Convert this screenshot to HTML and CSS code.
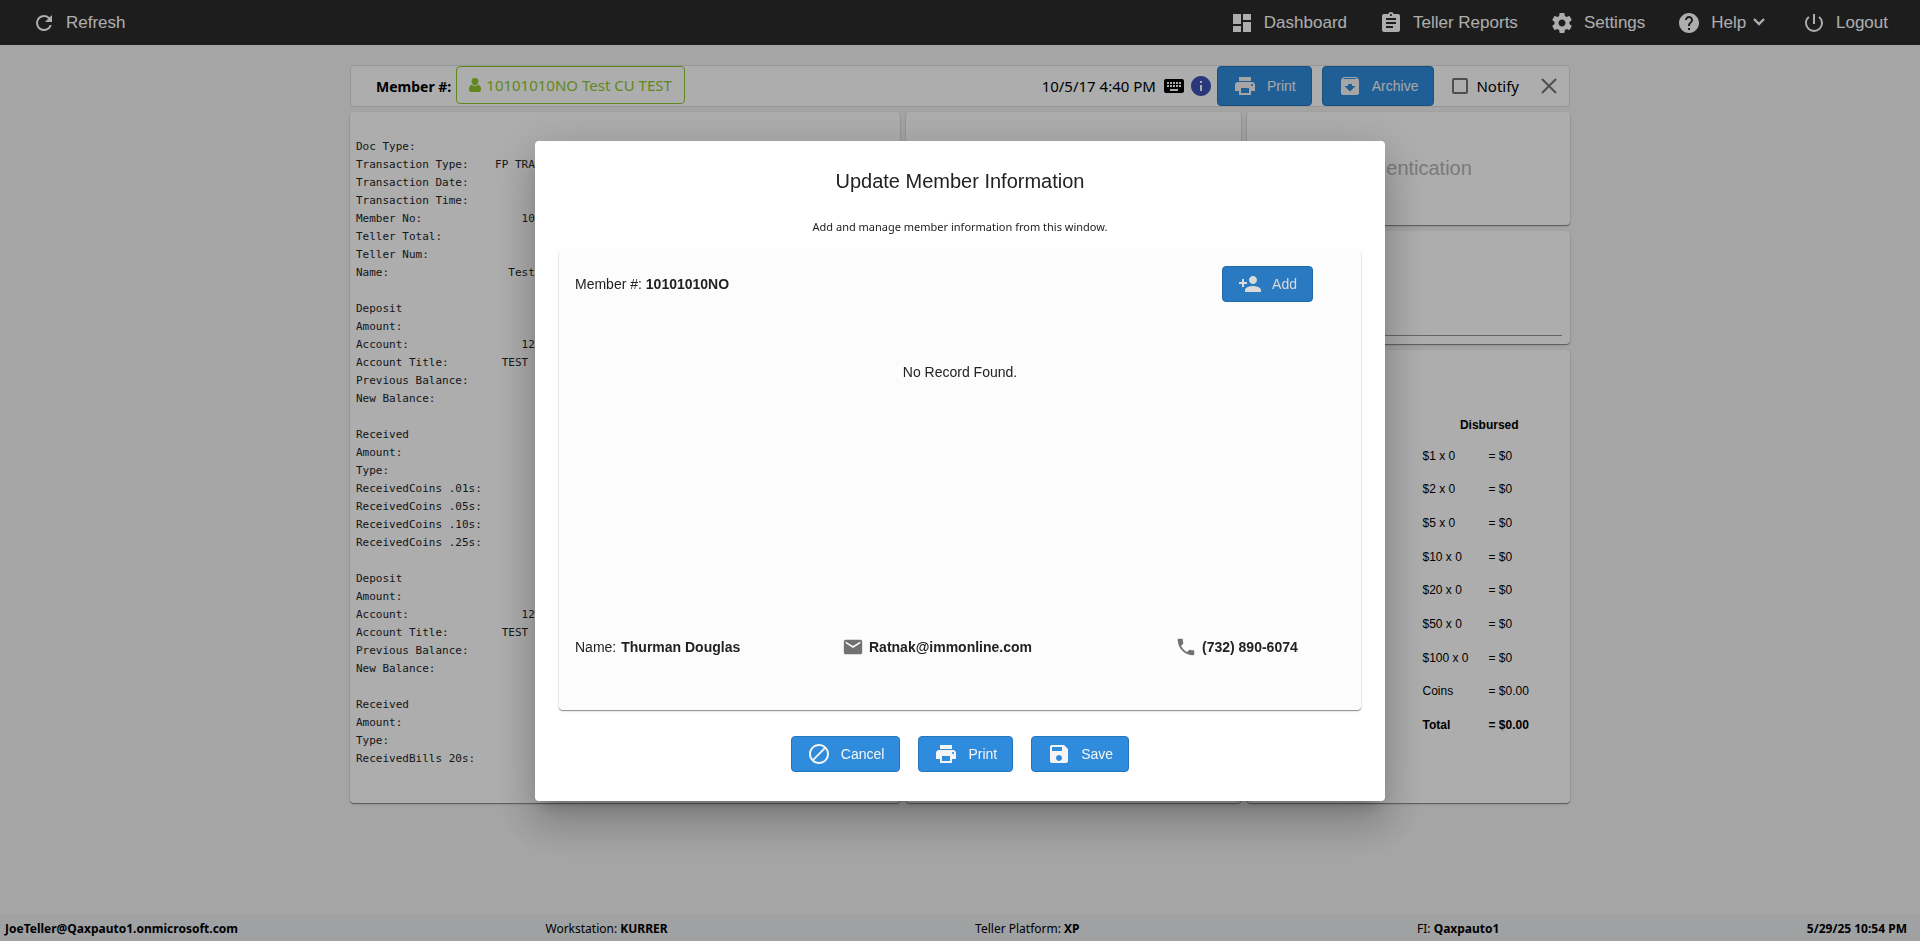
FILE: index.html
```html
<!doctype html>
<html lang="en">
<head>
<meta charset="utf-8">
<title>Teller</title>
<link rel="stylesheet" href="styles.css">
</head>
<body>

<nav class="navbar">
	<a href="#" class="nav-link">
		<svg class="icon" viewBox="0 0 24 24"><path d="M17.65 6.35A7.96 7.96 0 0 0 12 4a8 8 0 1 0 7.73 10h-2.08A6 6 0 1 1 12 6c1.66 0 3.14.69 4.22 1.78L13 11h7V4z"/></svg>
		Refresh
	</a>
	<div class="nav-right">
		<a href="#" class="nav-link">
			<svg class="icon" viewBox="0 0 24 24"><path d="M3 13h8V3H3v10zm0 8h8v-6H3v6zm10 0h8V11h-8v10zm0-18v6h8V3h-8z"/></svg>
			Dashboard
		</a>
		<a href="#" class="nav-link">
			<svg class="icon" viewBox="0 0 24 24"><path d="M19 3h-4.18C14.4 1.84 13.3 1 12 1s-2.4.84-2.82 2H5c-1.1 0-2 .9-2 2v14c0 1.1.9 2 2 2h14c1.1 0 2-.9 2-2V5c0-1.1-.9-2-2-2zm-7 0c.55 0 1 .45 1 1s-.45 1-1 1-1-.45-1-1 .45-1 1-1zm2 14H7v-2h7v2zm3-4H7v-2h10v2zm0-4H7V7h10v2z"/></svg>
			Teller Reports
		</a>
		<a href="#" class="nav-link">
			<svg class="icon" viewBox="0 0 24 24"><path d="M19.43 12.98c.04-.32.07-.64.07-.98s-.03-.66-.07-.98l2.11-1.65c.19-.15.24-.42.12-.64l-2-3.46c-.12-.22-.39-.3-.61-.22l-2.49 1c-.52-.4-1.08-.73-1.69-.98l-.38-2.65C14.46 2.18 14.25 2 14 2h-4c-.25 0-.46.18-.49.42l-.38 2.65c-.61.25-1.17.59-1.69.98l-2.49-1c-.23-.09-.49 0-.61.22l-2 3.46c-.13.22-.07.49.12.64l2.11 1.65c-.04.32-.07.65-.07.98s.03.66.07.98l-2.11 1.65c-.19.15-.24.42-.12.64l2 3.46c.12.22.39.3.61.22l2.49-1c.52.4 1.08.73 1.69.98l.38 2.65c.03.24.24.42.49.42h4c.25 0 .46-.18.49-.42l.38-2.65c.61-.25 1.17-.59 1.69-.98l2.49 1c.23.09.49 0 .61-.22l2-3.46c.12-.22.07-.49-.12-.64l-2.11-1.65zM12 15.5c-1.93 0-3.5-1.57-3.5-3.5s1.57-3.5 3.5-3.5 3.5 1.57 3.5 3.5-1.57 3.5-3.5 3.5z"/></svg>
			Settings
		</a>
		<button type="button" class="nav-link">
			<svg class="icon" viewBox="0 0 24 24"><path d="M12 2C6.48 2 2 6.48 2 12s4.48 10 10 10 10-4.48 10-10S17.52 2 12 2zm1 17h-2v-2h2v2zm2.07-7.75l-.9.92C13.45 12.9 13 13.5 13 15h-2v-.5c0-1.1.45-2.1 1.17-2.83l1.24-1.26c.37-.36.59-.86.59-1.41 0-1.1-.9-2-2-2s-2 .9-2 2H8c0-2.21 1.79-4 4-4s4 1.79 4 4c0 .88-.36 1.68-.93 2.25z"/></svg>
			<span class="help-label">Help <svg class="chevron" viewBox="0 0 12 12"><path d="M1 3l5 5 5-5"/></svg></span>
		</button>
		<a href="#" class="nav-link">
			<svg class="icon" viewBox="0 0 24 24"><path d="M13 3h-2v10h2V3zm4.83 2.17l-1.42 1.42A6.92 6.92 0 0 1 19 12c0 3.87-3.13 7-7 7A6.995 6.995 0 0 1 7.58 6.58L6.17 5.17A8.932 8.932 0 0 0 3 12a9 9 0 0 0 18 0c0-2.74-1.23-5.18-3.17-6.83z"/></svg>
			Logout
		</a>
	</div>
</nav>

<main class="container">
	<header class="toolbar">
		<b>Member #:</b>
		<button type="button" class="member-btn">
			<svg class="user" viewBox="0 0 12 14"><path d="M6 0a3.4 3.4 0 0 1 3.4 3.5C9.400 5.500 8 7.200 6 7.200S2.600 5.500 2.600 3.500A3.400 3.400 0 0 1 6 0zM3 6.800c.8.800 1.900 1.300 3 1.300s2.200-.5 3-1.300c2.200.2 3 2.300 3 4.700 0 1.500-.9 2.500-2.200 2.500H2.200C.9 14 0 13 0 11.500c0-2.400.8-4.500 3-4.700z"/></svg>
			10101010NO Test CU TEST
		</button>
		<div class="toolbar-right">
			<span class="date">10/5/17 4:40 PM</span>
			<svg class="icon keyboard" viewBox="0 0 24 24"><path d="M20 5H4c-1.100 0-2 .9-2 2v10c0 1.100.9 2 2 2h16c1.100 0 2-.9 2-2V7c0-1.100-.9-2-2-2zm-9 3h2v2h-2V8zm0 3h2v2h-2v-2zM8 8h2v2H8V8zm0 3h2v2H8v-2zm-1 2H5v-2h2v2zm0-3H5V8h2v2zm9 7H8v-2h8v2zm0-4h-2v-2h2v2zm0-3h-2V8h2v2zm3 3h-2v-2h2v2zm0-3h-2V8h2v2z"/></svg>
			<svg class="icon info" viewBox="0 0 24 24"><path d="M12 2C6.480 2 2 6.480 2 12s4.480 10 10 10 10-4.480 10-10S17.520 2 12 2zm1 15h-2v-6h2v6zm0-8h-2V7h2v2z"/></svg>
			<button type="button" class="btn btn-tall">
				<svg class="icon" viewBox="0 0 24 24"><path d="M19 8H5c-1.660 0-3 1.340-3 3v6h4v4h12v-4h4v-6c0-1.660-1.340-3-3-3zm-3 11H8v-5h8v5zm3-7c-.55 0-1-.45-1-1s.45-1 1-1 1 .45 1 1-.45 1-1 1zm-1-9H6v4h12V3z"/></svg>
				Print
			</button>
			<button type="button" class="btn btn-tall archive">
				<svg class="icon" viewBox="0 0 24 24"><path d="M20.540 5.230l-1.390-1.680C18.880 3.210 18.470 3 18 3H6c-.47 0-.88.21-1.160.55L3.460 5.230C3.170 5.570 3 6.020 3 6.500V19c0 1.100.9 2 2 2h14c1.100 0 2-.9 2-2V6.500c0-.48-.17-.93-.46-1.270zM12 17.500L6.500 12H10v-2h4v2h3.500L12 17.500zM5.120 5l.81-1h12l.94 1H5.120z"/></svg>
				Archive
			</button>
			<label class="notify"><input type="checkbox"> Notify</label>
			<button type="button" class="close" aria-label="Close">
				<svg class="icon" viewBox="0 0 24 24"><path d="M5 5l14 14M19 5L5 19"/></svg>
			</button>
		</div>
	</header>

	<div class="columns">
		<section class="card receipt">
<pre>
Doc Type:
Transaction Type:    FP TRAN
Transaction Date:
Transaction Time:
Member No:               101010
Teller Total:
Teller Num:
Name:                  Test CU

Deposit
Amount:
Account:                 12
Account Title:        TEST -
Previous Balance:
New Balance:

Received
Amount:
Type:
ReceivedCoins .01s:
ReceivedCoins .05s:
ReceivedCoins .10s:
ReceivedCoins .25s:

Deposit
Amount:
Account:                 12
Account Title:        TEST -
Previous Balance:
New Balance:

Received
Amount:
Type:
ReceivedBills 20s:
</pre>
		</section>
		<section class="card"></section>
		<div class="side">
			<section class="card auth">Authentication</section>
			<section class="card sign"><div class="sign-line"></div></section>
			<section class="card cash">
				<table>
					<thead><tr><th colspan="2">Disbursed</th></tr></thead>
					<tbody>
						<tr><td>$1 x 0</td><td>= $0</td></tr>
						<tr><td>$2 x 0</td><td>= $0</td></tr>
						<tr><td>$5 x 0</td><td>= $0</td></tr>
						<tr><td>$10 x 0</td><td>= $0</td></tr>
						<tr><td>$20 x 0</td><td>= $0</td></tr>
						<tr><td>$50 x 0</td><td>= $0</td></tr>
						<tr><td>$100 x 0</td><td>= $0</td></tr>
						<tr><td>Coins</td><td>= $0.00</td></tr>
						<tr class="total"><td>Total</td><td>= $0.00</td></tr>
					</tbody>
				</table>
			</section>
		</div>
	</div>
</main>

<footer class="statusbar">
	<span><b>JoeTeller@Qaxpauto1.onmicrosoft.com</b></span>
	<span>Workstation: <b>KURRER</b></span>
	<span>Teller Platform: <b>XP</b></span>
	<span class="fi">FI: <b>Qaxpauto1</b></span>
	<span><b>5/29/25 10:54 PM</b></span>
</footer>

<div class="backdrop">
	<div class="modal" role="dialog" aria-labelledby="modal-title">
		<h2 id="modal-title">Update Member Information</h2>
		<p class="subtitle">Add and manage member information from this window.</p>
		<div class="card modal-card">
			<div class="modal-head">
				<span>Member #: <b>10101010NO</b></span>
				<button type="button" class="btn btn-hover">
					<svg class="icon" viewBox="0 0 24 24"><path d="M15 12c2.210 0 4-1.790 4-4s-1.790-4-4-4-4 1.790-4 4 1.790 4 4 4zm-9-2V7H4v3H1v2h3v3h2v-3h3v-2H6zm9 4c-2.670 0-8 1.340-8 4v2h16v-2c0-2.660-5.330-4-8-4z"/></svg>
					Add
				</button>
			</div>
			<p class="empty">No Record Found.</p>
			<div class="contact">
				<span>Name: <b>Thurman Douglas</b></span>
				<span>
					<svg class="icon" viewBox="0 0 24 24"><path d="M20 4H4c-1.100 0-1.990.9-1.990 2L2 18c0 1.100.9 2 2 2h16c1.100 0 2-.9 2-2V6c0-1.100-.9-2-2-2zm0 4l-8 5-8-5V6l8 5 8-5v2z"/></svg>
					<b>Ratnak@immonline.com</b>
				</span>
				<span>
					<svg class="icon" viewBox="0 0 24 24"><path d="M6.620 10.790c1.440 2.830 3.760 5.140 6.590 6.590l2.200-2.200c.27-.27.67-.36 1.020-.24 1.120.37 2.330.57 3.570.57.55 0 1 .45 1 1V20c0 .55-.45 1-1 1-9.390 0-17-7.610-17-17 0-.55.45-1 1-1h3.500c.55 0 1 .45 1 1 0 1.250.2 2.450.57 3.570.11.35.03.74-.25 1.020l-2.200 2.200z"/></svg>
					<b>(732) 890-6074</b>
				</span>
			</div>
		</div>
		<div class="actions">
			<button type="button" class="btn">
				<svg class="icon" viewBox="0 0 24 24"><path d="M12 2C6.480 2 2 6.480 2 12s4.480 10 10 10 10-4.480 10-10S17.520 2 12 2zM4 12c0-4.420 3.580-8 8-8 1.850 0 3.550.63 4.900 1.690L5.690 16.900C4.630 15.550 4 13.850 4 12zm8 8c-1.850 0-3.550-.63-4.900-1.690L18.310 7.100C19.370 8.450 20 10.150 20 12c0 4.420-3.580 8-8 8z"/></svg>
				Cancel
			</button>
			<button type="button" class="btn">
				<svg class="icon" viewBox="0 0 24 24"><path d="M19 8H5c-1.660 0-3 1.340-3 3v6h4v4h12v-4h4v-6c0-1.660-1.340-3-3-3zm-3 11H8v-5h8v5zm3-7c-.55 0-1-.45-1-1s.45-1 1-1 1 .45 1 1-.45 1-1 1zm-1-9H6v4h12V3z"/></svg>
				Print
			</button>
			<button type="button" class="btn">
				<svg class="icon" viewBox="0 0 24 24"><path d="M17 3H5c-1.110 0-2 .9-2 2v14c0 1.100.89 2 2 2h14c1.100 0 2-.9 2-2V7l-4-4zm-5 16c-1.660 0-3-1.340-3-3s1.340-3 3-3 3 1.340 3 3-1.340 3-3 3zm3-10H5V5h10v4z"/></svg>
				Save
			</button>
		</div>
	</div>
</div>

</body>
</html>
```

FILE: styles.css
```css
* {
	box-sizing: border-box;
}
body {
	margin: 0;
	min-height: 100vh;
	display: flex;
	flex-direction: column;
	background: #f3f3f3;
	font-family: "Liberation Sans", Arial, sans-serif;
	font-size: 14px;
	color: #000;
}
button {
	font-family: inherit;
	border: 0;
	background: none;
	padding: 0;
	cursor: pointer;
}
h2, p, pre {
	margin: 0;
}
.icon {
	width: 24px;
	height: 24px;
	flex: none;
	fill: currentColor;
}

/* top bar */
.navbar {
	height: 45px;
	padding: 0 32px;
	display: flex;
	justify-content: space-between;
	background: #2c2c2c;
}
.nav-right {
	display: flex;
	gap: 32px;
}
.nav-link {
	display: flex;
	align-items: center;
	gap: 10px;
	font-size: 17px;
	color: #fff;
	text-decoration: none;
}
.chevron {
	width: 12px;
	height: 12px;
	margin-left: 2px;
	fill: none;
	stroke: currentColor;
	stroke-width: 2.4;
}
.help-label {
	padding-right: 5px;
}

/* page */
.container {
	width: 100%;
	max-width: 1220px;
	margin: 20px auto 0;
	flex: 1;
}
.toolbar {
	display: flex;
	align-items: center;
	height: 42px;
	padding: 0 8px 0 25px;
	border: 1px solid #ddd;
	border-radius: 4px;
	background: #fff;
	font-family: "Noto Sans", "Segoe UI", sans-serif;
	font-size: 15px;
}
.toolbar > b {
	font-size: 14px;
}
.member-btn {
	display: flex;
	align-items: center;
	align-self: flex-start;
	gap: 5px;
	height: 38px;
	margin-left: 5px;
	padding: 0 12px;
	border: 1px solid #8fc92d;
	border-radius: 4px;
	font-size: 15px;
	color: #8fc92d;
}
.user {
	width: 12px;
	height: 14px;
	fill: currentColor;
}
.toolbar-right {
	display: flex;
	align-items: center;
	margin-left: auto;
}
.keyboard {
	margin: 0 3px 0 6px;
}
.info {
	margin-right: 4px;
	color: #3f51b5;
}
.btn {
	display: flex;
	align-items: center;
	gap: 10px;
	height: 36px;
	padding: 0 15px;
	border: 1px solid #2476bd;
	border-radius: 4px;
	background: #2f8cdc;
	font-family: "Liberation Sans", Arial, sans-serif;
	font-size: 14px;
	color: #f5f5f5;
}
.btn-tall {
	height: 40px;
}
.btn-hover {
	border-color: #2069aa;
	background: #2a7ac1;
	color: #dadada;
}
.archive {
	margin-left: 10px;
}
.notify {
	display: flex;
	align-items: center;
	gap: 8px;
	margin: 0 18px;
}
.notify input {
	appearance: none;
	width: 16px;
	height: 16px;
	margin: 0;
	border: 2px solid #757575;
	border-radius: 2px;
}
.close {
	display: flex;
	color: #757575;
}
.close .icon {
	stroke: currentColor;
	stroke-width: 2;
}

.columns {
	display: grid;
	grid-template-columns: 550fr 335fr 323fr;
	gap: 6px;
	margin-top: 5px;
}
.card {
	border-radius: 4px;
	background: #fff;
	box-shadow: 0 1px 1px rgba(0, 0, 0, 0.4), 0 1px 3px rgba(0, 0, 0, 0.12);
}
.receipt {
	padding: 26px 6px 35px;
}
.receipt pre {
	width: fit-content;
	font: 11px/18px "DejaVu Sans Mono", Consolas, monospace;
	color: #212529;
}
.side {
	display: flex;
	flex-direction: column;
	gap: 6px;
}
.auth {
	height: 113px;
	line-height: 112px;
	text-align: center;
	font-size: 20px;
	color: #b5b5b5;
}
.sign {
	padding: 104px 8px 8px;
}
.sign-line {
	border-top: 1px solid #949494;
}
.cash {
	flex: 1;
	display: flex;
	justify-content: flex-end;
	padding-top: 60px;
}
.cash table {
	width: 50%;
	height: 332px;
	border-collapse: collapse;
	font-size: 12px;
}
.cash th {
	height: 29px;
	padding: 0;
}
.cash td {
	padding: 0;
}
.cash td:first-child {
	width: 80px;
	padding-left: 14px;
}
.cash .total {
	font-weight: bold;
}

.statusbar {
	display: flex;
	justify-content: space-between;
	align-items: center;
	height: 26px;
	padding: 0 13px 0 5px;
	background: #ebedef;
	font-family: "Noto Sans", "Segoe UI", sans-serif;
	font-size: 12px;
}
.fi {
	margin-left: 30px;
}

/* dialog */
.backdrop {
	position: fixed;
	inset: 0;
	display: flex;
	align-items: center;
	justify-content: center;
	background: rgba(0, 0, 0, 0.32);
}
.modal {
	width: 850px;
	padding: 24px 24px 29px;
	border-radius: 4px;
	background: #fff;
	box-shadow: 0 11px 15px -7px rgba(0, 0, 0, 0.2), 0 24px 38px 3px rgba(0, 0, 0, 0.14), 0 9px 46px 8px rgba(0, 0, 0, 0.12);
	color: #222;
}
.modal h2 {
	font-size: 20px;
	font-weight: normal;
	line-height: 32px;
	text-align: center;
}
.subtitle {
	margin: 21px 0 14px;
	font: 11px/18px "Noto Sans", "Segoe UI", sans-serif;
	text-align: center;
}
.modal-card {
	display: flex;
	flex-direction: column;
	height: 460px;
	padding: 16px;
	background: #fcfcfc;
}
.modal-head {
	display: flex;
	justify-content: space-between;
	align-items: center;
	padding-right: 32px;
}
.empty {
	margin-top: 60px;
	line-height: 20px;
	text-align: center;
}
.contact {
	display: grid;
	grid-template-columns: 267px 333px 1fr;
	align-items: center;
	margin-top: auto;
	margin-bottom: 36px;
}
.contact span {
	display: flex;
	align-items: center;
	gap: 5px;
}
.contact .icon {
	width: 22px;
	height: 22px;
	fill: #717171;
}
.actions {
	display: flex;
	justify-content: center;
	gap: 18px;
	margin-top: 26px;
}
```
